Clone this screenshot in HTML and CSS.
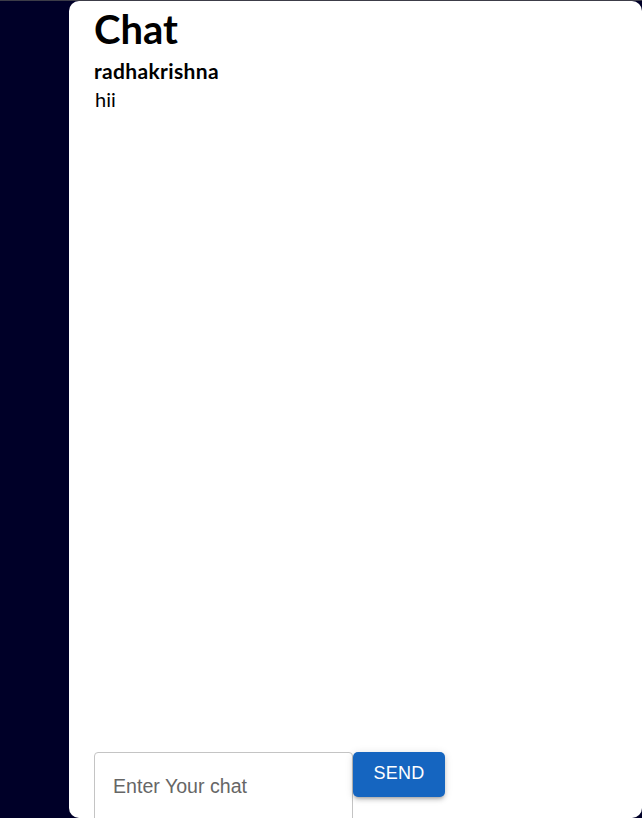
FILE: index.html
```html
<!DOCTYPE html>
<html lang="en">
<head>
<meta charset="utf-8">
<title>Chat</title>
<link rel="stylesheet" href="styles.css">
</head>
<body>
  <main class="panel">
    <h1 class="title">Chat</h1>
    <section class="messages">
      <div class="message">
        <div class="author">radhakrishna</div>
        <div class="text">hii</div>
      </div>
    </section>
    <form class="composer">
      <div class="field">
        <input class="input" type="text" placeholder="Enter Your chat">
      </div>
      <button class="send" type="button">SEND</button>
    </form>
  </main>
</body>
</html>
```

FILE: styles.css
```css
html, body {
  margin: 0;
  padding: 0;
  height: 100%;
}

body {
  background: #000028;
  border-top: 1px solid #3c3c48;
  box-sizing: border-box;
  overflow: hidden;
  font-family: "Lato", "Open Sans", sans-serif;
  color: #000;
}

.panel {
  margin-left: 69px;
  width: 573px;
  height: 817px;
  background: #fff;
  border-radius: 10px;
  box-sizing: border-box;
  padding: 0 25px;
  display: flex;
  flex-direction: column;
  overflow: hidden;
}

.title {
  margin: 3.5px 0 0;
  font-size: 40px;
  line-height: 48px;
  font-weight: 700;
}

.messages {
  flex: 1;
  margin-top: 4px;
}

.author {
  font-size: 21px;
  line-height: 28px;
  font-weight: 700;
  letter-spacing: 0.35px;
}

.text {
  font-size: 20px;
  line-height: 28px;
  padding-left: 1px;
}

.composer {
  display: flex;
  align-items: flex-start;
  height: 66px;
  margin: 0;
}

.field {
  width: 259px;
  height: 72px;
  border: 1px solid #c4c4c4;
  border-radius: 4px;
  box-sizing: border-box;
  display: flex;
}

.input {
  border: none;
  outline: none;
  background: transparent;
  width: 100%;
  padding: 0 0 4px 18px;
  font-family: "Liberation Sans", Arial, sans-serif;
  font-size: 19.6px;
  color: #222;
}

.input::placeholder {
  color: #666;
  opacity: 1;
}

.send {
  width: 92px;
  height: 45px;
  margin-left: 0;
  border: none;
  border-radius: 5px;
  background: #1565c0;
  color: #fff;
  font-family: "Liberation Sans", Arial, sans-serif;
  font-size: 18px;
  letter-spacing: 0.3px;
  padding: 0 0 3px;
  box-shadow: 0 3px 3px -2px rgba(0,0,0,0.2), 0 3px 4px 0 rgba(0,0,0,0.14), 0 1px 8px 0 rgba(0,0,0,0.12);
  cursor: pointer;
}
```
